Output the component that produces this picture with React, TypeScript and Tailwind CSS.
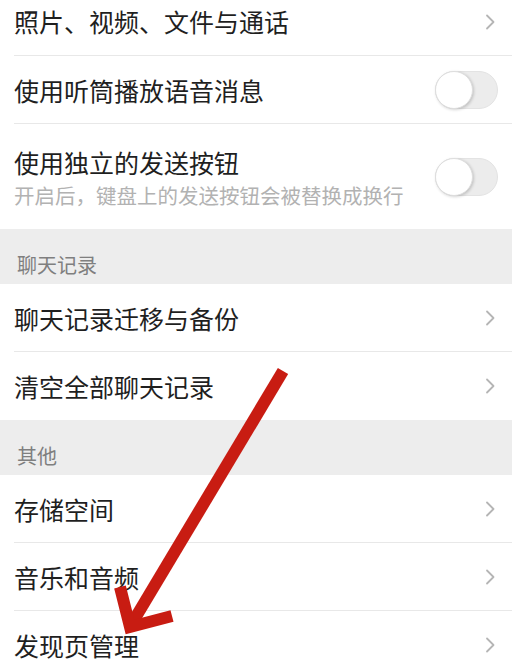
const FONT = '"Noto Sans CJK SC", "Noto Sans", sans-serif';

function Chevron() {
  return (
    <svg width="10" height="16" viewBox="0 0 10 16" className="shrink-0">
      <path d="M2 1.5 L8.5 8 L2 14.5" fill="none" stroke="#b5b5b5" strokeWidth="1.8" strokeLinecap="round" strokeLinejoin="round" />
    </svg>
  );
}

function Toggle() {
  return (
    <div className="relative h-[38px] w-[63px] shrink-0 rounded-full border border-[#e3e3e3] bg-[#ececec]">
      <div className="absolute left-[-1px] top-[-1px] h-[38px] w-[38px] rounded-full border border-[#dedede] bg-white shadow-[1px_1px_3px_rgba(0,0,0,0.18)]" />
    </div>
  );
}

function LinkRow({ label, divider = true }: { label: string; divider?: boolean }) {
  return (
    <div className="relative flex h-[68px] items-center justify-between pl-[14px] pr-[17px]">
      <span className="text-[25px] leading-none text-[#1f1f1f]">{label}</span>
      <Chevron />
      {divider && <div className="absolute bottom-0 left-[14px] right-0 h-px bg-[#e8e8e8]" />}
    </div>
  );
}

function Section({ title }: { title: string }) {
  return (
    <div className="flex h-[55px] items-end bg-[#ededed] pb-[9px] pl-[17px]">
      <span className="text-[20px] leading-none text-[#7f7f7f]">{title}</span>
    </div>
  );
}

export default function App() {
  return (
    <div className="relative h-[666px] w-[512px] overflow-hidden bg-white" style={{ fontFamily: FONT }}>
      <div className="-mt-[13px]">
        <div className="relative flex h-[69px] items-center justify-between pl-[14px] pr-[17px]">
          <span className="text-[25px] leading-none text-[#1f1f1f]">照片、视频、文件与通话</span>
          <Chevron />
          <div className="absolute bottom-0 left-[14px] right-0 h-px bg-[#e8e8e8]" />
        </div>

        <div className="relative flex h-[68px] items-center justify-between pl-[14px] pr-[14px]">
          <span className="text-[25px] leading-none text-[#1f1f1f]">使用听筒播放语音消息</span>
          <Toggle />
          <div className="absolute bottom-0 left-[14px] right-0 h-px bg-[#e8e8e8]" />
        </div>

        <div className="flex h-[105px] items-center justify-between pl-[14px] pr-[14px]">
          <div className="flex flex-col gap-[10px] pt-[2px]">
            <span className="text-[25px] leading-none text-[#1f1f1f]">使用独立的发送按钮</span>
            <span className="text-[20.5px] leading-none text-[#b2b2b2]">开启后，键盘上的发送按钮会被替换成换行</span>
          </div>
          <Toggle />
        </div>

        <Section title="聊天记录" />
        <LinkRow label="聊天记录迁移与备份" />
        <LinkRow label="清空全部聊天记录" divider={false} />

        <Section title="其他" />
        <LinkRow label="存储空间" />
        <LinkRow label="音乐和音频" />
        <LinkRow label="发现页管理" divider={false} />
      </div>

      <svg className="pointer-events-none absolute left-0 top-0" width="512" height="666" viewBox="0 0 512 666">
        <line x1="283" y1="371" x2="134" y2="620" stroke="#c81c12" strokeWidth="12" />
        <polyline points="120,587 130,627 172,616" fill="none" stroke="#c81c12" strokeWidth="12" strokeLinejoin="miter" />
      </svg>
    </div>
  );
}
